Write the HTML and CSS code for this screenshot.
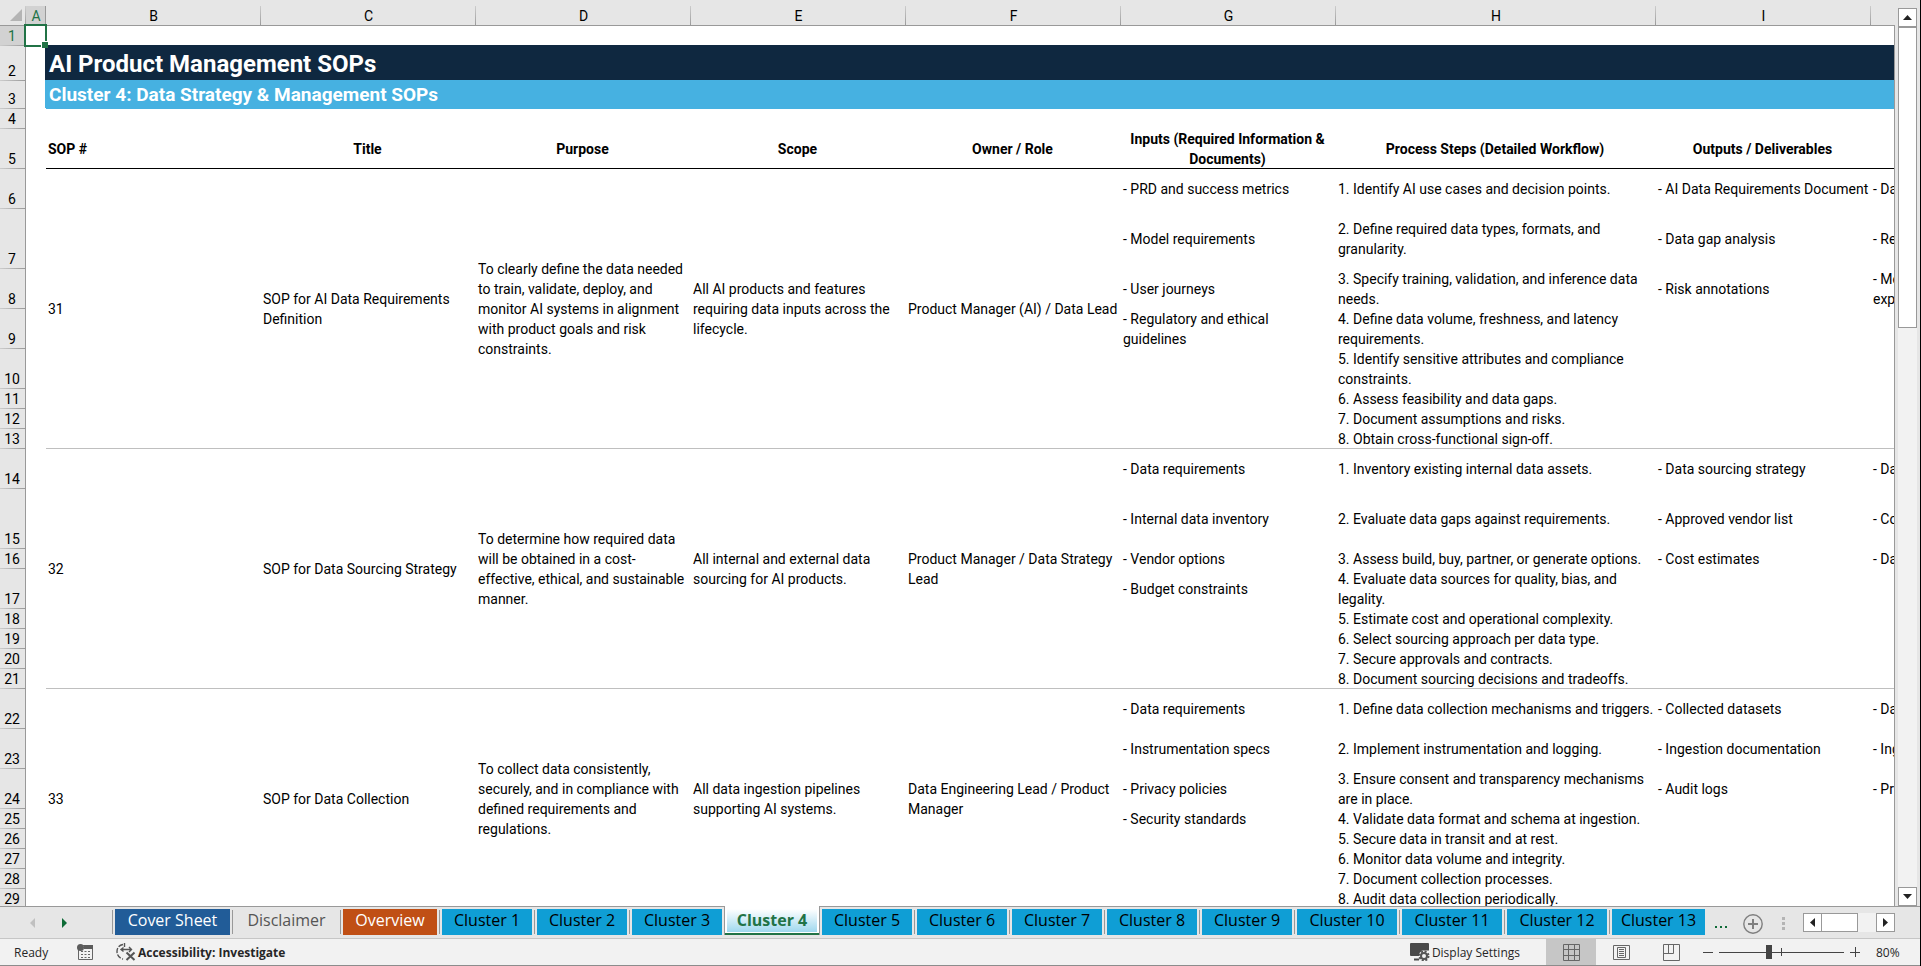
FILE: index.html
```html
<!DOCTYPE html>
<html lang="en">
  <head>
    <meta charset="UTF-8" />
    <meta name="viewport" content="width=device-width, initial-scale=1.0" />
    <title>AI Product Management SOPs</title>
    <link rel="stylesheet" href="styles.css">
  </head>
  <body>
    <main class="workspace">
      <div class="sheet-pane">
        <table class="sheet">
          <colgroup>
            <col class="col-num" />
            <col class="col-a" />
            <col span="6" class="col-std" />
            <col class="col-steps" />
            <col span="2" class="col-std" />
          </colgroup>
          <thead>
            <tr class="letters">
              <td class="corner"><svg width="12" height="12" viewBox="0 0 12 12"><path d="M12 0v12H0z" fill="#b4b4b4" /></svg></td>
              <th class="selected">A</th>
              <th>B</th>
              <th>C</th>
              <th>D</th>
              <th>E</th>
              <th>F</th>
              <th>G</th>
              <th>H</th>
              <th>I</th>
              <th></th>
            </tr>
          </thead>
          <tbody>
            <tr class="h20">
              <th class="num selected">1</th>
              <td class="active-cell"><span class="cursor"></span></td>
              <td colspan="9"></td>
            </tr>
            <tr class="h35">
              <th class="num">2</th>
              <td></td>
              <td colspan="9" class="banner">AI Product Management SOPs</td>
            </tr>
            <tr class="h28">
              <th class="num">3</th>
              <td></td>
              <td colspan="9" class="sub-banner">Cluster 4: Data Strategy &amp; Management SOPs</td>
            </tr>
            <tr class="h20">
              <th class="num">4</th>
              <td></td>
              <td colspan="9"></td>
            </tr>
            <tr class="h40 headings">
              <th class="num">5</th>
              <td></td>
              <th scope="col" class="left">SOP #</th>
              <th scope="col">Title</th>
              <th scope="col">Purpose</th>
              <th scope="col">Scope</th>
              <th scope="col">Owner / Role</th>
              <th scope="col">Inputs (Required Information &amp;<br />Documents)</th>
              <th scope="col">Process Steps (Detailed Workflow)</th>
              <th scope="col">Outputs / Deliverables</th>
              <th scope="col"></th>
            </tr>

            <!-- SOP 31 -->
            <tr class="h40">
              <th class="num">6</th>
              <td></td>
              <td rowspan="8" class="end">31</td>
              <td rowspan="8" class="end">SOP for AI Data Requirements<br />Definition</td>
              <td rowspan="8" class="end">To clearly define the data needed<br />to train, validate, deploy, and<br />monitor AI systems in alignment<br />with product goals and risk<br />constraints.</td>
              <td rowspan="8" class="end">All AI products and features<br />requiring data inputs across the<br />lifecycle.</td>
              <td rowspan="8" class="end">Product Manager (AI) / Data Lead</td>
              <td>- PRD and success metrics</td>
              <td>1. Identify AI use cases and decision points.</td>
              <td>- AI Data Requirements Document</td>
              <td>- Da</td>
            </tr>
            <tr class="h60">
              <th class="num">7</th>
              <td></td>
              <td>- Model requirements</td>
              <td>2. Define required data types, formats, and<br />granularity.</td>
              <td>- Data gap analysis</td>
              <td>- Re</td>
            </tr>
            <tr class="h40">
              <th class="num">8</th>
              <td></td>
              <td>- User journeys</td>
              <td>3. Specify training, validation, and inference data<br />needs.</td>
              <td>- Risk annotations</td>
              <td>- Mo<br />exp</td>
            </tr>
            <tr class="h40">
              <th class="num">9</th>
              <td></td>
              <td>- Regulatory and ethical<br />guidelines</td>
              <td>4. Define data volume, freshness, and latency<br />requirements.</td>
              <td></td>
              <td></td>
            </tr>
            <tr class="h40">
              <th class="num">10</th>
              <td></td>
              <td></td>
              <td>5. Identify sensitive attributes and compliance<br />constraints.</td>
              <td></td>
              <td></td>
            </tr>
            <tr class="h20">
              <th class="num">11</th>
              <td></td>
              <td></td>
              <td>6. Assess feasibility and data gaps.</td>
              <td></td>
              <td></td>
            </tr>
            <tr class="h20">
              <th class="num">12</th>
              <td></td>
              <td></td>
              <td>7. Document assumptions and risks.</td>
              <td></td>
              <td></td>
            </tr>
            <tr class="h20">
              <th class="num">13</th>
              <td></td>
              <td class="end"></td>
              <td class="end">8. Obtain cross-functional sign-off.</td>
              <td class="end"></td>
              <td class="end"></td>
            </tr>

            <!-- SOP 32 -->
            <tr class="h40">
              <th class="num">14</th>
              <td></td>
              <td rowspan="8" class="end">32</td>
              <td rowspan="8" class="end">SOP for Data Sourcing Strategy</td>
              <td rowspan="8" class="end">To determine how required data<br />will be obtained in a cost-<br />effective, ethical, and sustainable<br />manner.</td>
              <td rowspan="8" class="end">All internal and external data<br />sourcing for AI products.</td>
              <td rowspan="8" class="end">Product Manager / Data Strategy<br />Lead</td>
              <td>- Data requirements</td>
              <td>1. Inventory existing internal data assets.</td>
              <td>- Data sourcing strategy</td>
              <td>- Da</td>
            </tr>
            <tr class="h60">
              <th class="num">15</th>
              <td></td>
              <td>- Internal data inventory</td>
              <td>2. Evaluate data gaps against requirements.</td>
              <td>- Approved vendor list</td>
              <td>- Co</td>
            </tr>
            <tr class="h20">
              <th class="num">16</th>
              <td></td>
              <td>- Vendor options</td>
              <td>3. Assess build, buy, partner, or generate options.</td>
              <td>- Cost estimates</td>
              <td>- Da</td>
            </tr>
            <tr class="h40">
              <th class="num">17</th>
              <td></td>
              <td>- Budget constraints</td>
              <td>4. Evaluate data sources for quality, bias, and<br />legality.</td>
              <td></td>
              <td></td>
            </tr>
            <tr class="h20">
              <th class="num">18</th>
              <td></td>
              <td></td>
              <td>5. Estimate cost and operational complexity.</td>
              <td></td>
              <td></td>
            </tr>
            <tr class="h20">
              <th class="num">19</th>
              <td></td>
              <td></td>
              <td>6. Select sourcing approach per data type.</td>
              <td></td>
              <td></td>
            </tr>
            <tr class="h20">
              <th class="num">20</th>
              <td></td>
              <td></td>
              <td>7. Secure approvals and contracts.</td>
              <td></td>
              <td></td>
            </tr>
            <tr class="h20">
              <th class="num">21</th>
              <td></td>
              <td class="end"></td>
              <td class="end">8. Document sourcing decisions and tradeoffs.</td>
              <td class="end"></td>
              <td class="end"></td>
            </tr>

            <!-- SOP 33 -->
            <tr class="h40">
              <th class="num">22</th>
              <td></td>
              <td rowspan="8" class="end">33</td>
              <td rowspan="8" class="end">SOP for Data Collection</td>
              <td rowspan="8" class="end">To collect data consistently,<br />securely, and in compliance with<br />defined requirements and<br />regulations.</td>
              <td rowspan="8" class="end">All data ingestion pipelines<br />supporting AI systems.</td>
              <td rowspan="8" class="end">Data Engineering Lead / Product<br />Manager</td>
              <td>- Data requirements</td>
              <td>1. Define data collection mechanisms and triggers.</td>
              <td>- Collected datasets</td>
              <td>- Da</td>
            </tr>
            <tr class="h40">
              <th class="num">23</th>
              <td></td>
              <td>- Instrumentation specs</td>
              <td>2. Implement instrumentation and logging.</td>
              <td>- Ingestion documentation</td>
              <td>- Ing</td>
            </tr>
            <tr class="h40">
              <th class="num">24</th>
              <td></td>
              <td>- Privacy policies</td>
              <td>3. Ensure consent and transparency mechanisms<br />are in place.</td>
              <td>- Audit logs</td>
              <td>- Pr</td>
            </tr>
            <tr class="h20">
              <th class="num">25</th>
              <td></td>
              <td>- Security standards</td>
              <td>4. Validate data format and schema at ingestion.</td>
              <td></td>
              <td></td>
            </tr>
            <tr class="h20">
              <th class="num">26</th>
              <td></td>
              <td></td>
              <td>5. Secure data in transit and at rest.</td>
              <td></td>
              <td></td>
            </tr>
            <tr class="h20">
              <th class="num">27</th>
              <td></td>
              <td></td>
              <td>6. Monitor data volume and integrity.</td>
              <td></td>
              <td></td>
            </tr>
            <tr class="h20">
              <th class="num">28</th>
              <td></td>
              <td></td>
              <td>7. Document collection processes.</td>
              <td></td>
              <td></td>
            </tr>
            <tr class="h20">
              <th class="num">29</th>
              <td></td>
              <td class="end"></td>
              <td class="end">8. Audit data collection periodically.</td>
              <td class="end"></td>
              <td class="end"></td>
            </tr>
          </tbody>
        </table>
      </div>

      <div class="v-scroll">
        <button class="scroll-btn" aria-label="Scroll up"><svg width="9" height="5" viewBox="0 0 9 5"><path d="M4.500 0L9 5H0z" fill="#222" /></svg></button>
        <div class="v-track"><div class="v-thumb"></div></div>
        <button class="scroll-btn" aria-label="Scroll down"><svg width="9" height="5" viewBox="0 0 9 5"><path d="M0 0h9L4.500 5z" fill="#222" /></svg></button>
      </div>
    </main>

    <nav class="tab-bar">
      <div class="tab-nav">
        <button aria-label="Previous sheets"><svg width="5" height="10" viewBox="0 0 5 10"><path d="M5 0v10L0 5z" fill="#c0c0c0" /></svg></button>
        <button aria-label="Next sheets"><svg width="5" height="10" viewBox="0 0 5 10"><path d="M0 0v10l5-5z" fill="#0e6b37" /></svg></button>
      </div>
      <ul class="tabs">
        <li><button class="tab tab-cover">Cover Sheet</button></li>
        <li><button class="tab tab-plain">Disclaimer</button></li>
        <li><button class="tab tab-overview">Overview</button></li>
        <li><button class="tab">Cluster 1</button></li>
        <li><button class="tab">Cluster 2</button></li>
        <li><button class="tab">Cluster 3</button></li>
        <li class="current"><button class="tab">Cluster 4</button></li>
        <li><button class="tab">Cluster 5</button></li>
        <li><button class="tab">Cluster 6</button></li>
        <li><button class="tab">Cluster 7</button></li>
        <li><button class="tab">Cluster 8</button></li>
        <li><button class="tab">Cluster 9</button></li>
        <li><button class="tab tab-wide">Cluster 10</button></li>
        <li><button class="tab tab-wide">Cluster 11</button></li>
        <li><button class="tab tab-wide">Cluster 12</button></li>
        <li><button class="tab tab-last">Cluster 13</button></li>
      </ul>
      <div class="tab-tools">
        <button aria-label="More sheets"><svg width="14" height="20" viewBox="0 0 14 20"><path d="M1 12h2v2H1zM6 12h2v2H6zM11 12h2v2h-2z" fill="#0e6b37" /></svg></button>
        <button aria-label="New sheet"><svg width="20" height="20" viewBox="0 0 20 20" fill="none"><circle cx="10" cy="10" r="9.200" stroke="#7f7f7f" stroke-width="1.400" /><path d="M10 5v10M5 10h10" stroke="#7f7f7f" stroke-width="2" /></svg></button>
        <svg class="grip" width="3" height="13" viewBox="0 0 3 13"><path d="M0 0h3v3H0zM0 5h3v3H0zM0 10h3v3H0z" fill="#b4b4b4" /></svg>
      </div>
      <div class="h-scroll">
        <button class="scroll-btn" aria-label="Scroll left"><svg width="5" height="9" viewBox="0 0 5 9"><path d="M5 0v9L0 4.500z" fill="#222" /></svg></button>
        <div class="h-thumb"></div>
        <div class="h-track"></div>
        <button class="scroll-btn" aria-label="Scroll right"><svg width="5" height="9" viewBox="0 0 5 9"><path d="M0 0v9l5-4.500z" fill="#222" /></svg></button>
      </div>
    </nav>

    <footer class="status-bar">
      <span class="ready">Ready</span>
      <button class="macro" aria-label="Record macro">
        <svg width="16" height="16" viewBox="0 0 16 16">
          <path d="M5 1.500h10.500v14H1.500V6" fill="none" stroke="#666" />
          <path d="M7 1h9v4H7z" fill="#5c5c5c" />
          <circle cx="3.500" cy="3.500" r="3.500" fill="#5c5c5c" />
          <path d="M4 7.500h2M7.500 7.500h2M11 7.500h2M4 10.500h2M7.500 10.500h2M11 10.500h2M4 13.500h2M7.500 13.500h2M11 13.500h2" stroke="#666" />
        </svg>
      </button>
      <button class="access">
        <svg width="20" height="18" viewBox="0 0 20 18" fill="none" stroke="#555">
          <path d="M7 1.500C3 2 1 5 1 8.500S3 15 7 16" stroke-width="1.400" stroke-dasharray="5 1.500" />
          <path d="M8.500 0v4M5 6.500h10M7.500 4.500l-2.500 2 2.500 2M13 4l2.500 2.500L13 9" stroke-width="1.400" />
          <path d="M10.500 9.500l8 7.500M18.500 9.500l-8 7.500" stroke-width="2" />
        </svg>
        Accessibility: Investigate
      </button>
      <div class="status-right">
        <button class="display">
          <svg width="20" height="18" viewBox="0 0 20 18">
            <path d="M1 0h17a1 1 0 0 1 1 1v6.500h-7l-3 3v2.500H1a1 1 0 0 1-1-1V1a1 1 0 0 1 1-1z" fill="#4a4a4a" />
            <path d="M4 16.500h5" stroke="#4a4a4a" stroke-width="2" />
            <circle cx="14" cy="13" r="3" fill="none" stroke="#555" stroke-width="2" />
            <circle cx="14" cy="13" r="4.500" fill="none" stroke="#555" stroke-width="2" stroke-dasharray="2 1.534" />
          </svg>
          Display Settings
        </button>
        <button class="view active" aria-label="Normal view">
          <svg width="17" height="17" viewBox="0 0 17 17" fill="none" stroke="#666"><path d="M.5.5h16v16H.5zM5.500.5v16M11.500.5v16M.5 5.500h16M.5 11.500h16" /></svg>
        </button>
        <button class="view" aria-label="Page layout view">
          <svg width="17" height="17" viewBox="0 0 17 17" fill="none" stroke="#666"><path d="M.5 1.500h16v14H.5zM4.500 3.500h8v10h-8zM6 5.500h5M6 7.500h5M6 9.500h5M6 11.500h5" /></svg>
        </button>
        <button class="view" aria-label="Page break preview">
          <svg width="17" height="17" viewBox="0 0 17 17" fill="none" stroke="#666"><path d="M.5.500v16h16V.500zM.5 9.500h10V.500M5.500.500v9" /></svg>
        </button>
        <button class="zoom-btn" aria-label="Zoom out"><svg width="10" height="10" viewBox="0 0 10 10"><path d="M0 5.500h10" stroke="#444" /></svg></button>
        <span class="zoom">
          <input type="range" min="0" max="119" value="47" aria-label="Zoom" />
        </span>
        <button class="zoom-btn" aria-label="Zoom in"><svg width="10" height="10" viewBox="0 0 10 10"><path d="M0 5.500h10M5.500 0v10" stroke="#444" /></svg></button>
        <span class="percent">80%</span>
      </div>
    </footer>
  </body>
</html>
```
FILE: styles.css
```css
:root {
  --chrome: #e6e6e6;
  --chrome-selected: #d2d2d2;
  --line: #999;
  --green: #217346;
  --navy: #0f2840;
  --sky: #46b1e1;
  --tab-blue: #0f9ed5;
}

* {
  box-sizing: border-box;
  margin: 0;
  padding: 0;
}

body {
  display: flex;
  flex-direction: column;
  height: 100vh;
  overflow: hidden;
  background: var(--chrome);
  border-right: 1px solid #000;
  font-family: "Open Sans", "Noto Sans", sans-serif;
  color: #262626;
}

button {
  display: flex;
  align-items: center;
  justify-content: center;
  border: none;
  background: none;
  font: inherit;
  color: inherit;
  white-space: nowrap;
}

svg {
  display: block;
  flex: none;
}

/* Grid */
.workspace {
  display: flex;
  flex: 1;
  min-height: 0;
}

.sheet-pane {
  position: relative;
  flex: 1;
  min-width: 0;
  overflow: hidden;
}

.sheet-pane::after {
  content: "";
  position: absolute;
  top: 25px;
  right: 0;
  bottom: 0;
  width: 1px;
  background: var(--line);
}

.sheet {
  width: 2086px;
  table-layout: fixed;
  border-collapse: separate;
  border-spacing: 0;
  background: #fff;
  font: 14px/20px Roboto, sans-serif;
  color: #000;
}

.col-num {
  width: 26px;
}

.col-a {
  width: 20px;
}

.col-std {
  width: 215px;
}

.col-steps {
  width: 320px;
}

.sheet td,
.sheet th {
  padding-left: 2px;
  white-space: nowrap;
  vertical-align: middle;
}

.sheet td {
  text-align: left;
}

.h20 {
  height: 20px;
}

.h28 {
  height: 28px;
}

.h35 {
  height: 35px;
}

.h40 {
  height: 40px;
}

.h60 {
  height: 60px;
}

.letters {
  height: 26px;
}

.sheet .letters th,
.sheet .corner {
  padding: 6px 0 0;
  font-weight: 400;
  background: linear-gradient(var(--line), var(--line)) bottom / 100% 1px no-repeat,
    linear-gradient(#ccc, var(--line)) right bottom / 1px 20px no-repeat, var(--chrome);
}

.sheet .corner {
  padding: 4px 0 0 10px;
}

.sheet .letters .selected {
  background: linear-gradient(var(--line), var(--line)) bottom / 100% 1px no-repeat,
    linear-gradient(var(--line), var(--line)) right bottom / 1px 20px no-repeat,
    linear-gradient(var(--chrome-selected), var(--chrome-selected)) bottom / 100% 20px no-repeat, var(--chrome);
  color: var(--green);
}

.sheet .num {
  padding: 0 2px 0 0;
  font-weight: 400;
  text-align: center;
  vertical-align: bottom;
  background: linear-gradient(var(--line), var(--line)) right / 1px 100% no-repeat,
    linear-gradient(90deg, #ccc, var(--line)) bottom / 100% 1px no-repeat, var(--chrome);
}

.sheet .num.selected {
  background-color: var(--chrome-selected);
  color: var(--green);
}

.active-cell {
  position: relative;
}

.cursor {
  position: absolute;
  inset: -2px -1px -1px -2px;
  border: 2px solid var(--green);
}

.cursor::after {
  content: "";
  position: absolute;
  right: -3px;
  bottom: -3px;
  width: 6px;
  height: 6px;
  background: var(--green);
  border: solid #fff;
  border-width: 1px 0 0 1px;
}

/* Fills cover the gridline above and to the left */
.sheet .banner,
.sheet .sub-banner {
  padding-left: 3px;
  font-weight: 700;
  color: #fff;
}

.sheet .banner {
  background: var(--navy);
  box-shadow: -1px -1px var(--navy);
  font-size: 24px;
}

.sheet .sub-banner {
  background: var(--sky);
  box-shadow: -1px -1px var(--sky);
  font-size: 19px;
}

.headings th:not(.num) {
  padding-right: 4px;
  font-weight: 700;
  box-shadow: inset 0 -1px #000;
}

.headings .left {
  text-align: left;
}

.sheet .end {
  box-shadow: inset 0 -1px #bfbfbf;
}

/* Scrollbars */
.scroll-btn {
  width: 19px;
  height: 19px;
  flex: none;
  background: #fff;
  border: 1px solid var(--line);
}

.v-scroll {
  display: flex;
  flex-direction: column;
  width: 25px;
  padding: 8px 3px 0;
}

.v-track {
  flex: 1;
  background: #f2f2f2;
}

.v-thumb {
  height: 35%;
  background: #fff;
  border: 1px solid var(--line);
}

.h-scroll {
  display: flex;
  width: 92px;
  margin: 6px 25px 0 0;
}

.h-thumb {
  width: 36px;
  height: 19px;
  background: #fff;
  border: solid var(--line);
  border-width: 1px 1px 1px 0;
}

.h-track {
  flex: 1;
  height: 19px;
  background: #f2f2f2;
}

/* Sheet tabs */
.tab-bar {
  display: flex;
  flex: none;
  height: 33px;
  border-top: 1px solid var(--line);
  border-bottom: 1px solid #c6c6c6;
}

.tab-nav {
  display: flex;
  gap: 27px;
  width: 112px;
  padding-left: 30px;
}

.tabs {
  display: flex;
  list-style: none;
  border-left: 1px solid transparent;
  background: linear-gradient(var(--line), var(--line)) left 3px / 1px 24px no-repeat;
  background-origin: border-box;
}

.tabs li {
  height: 28px;
  padding: 2px 3px 0 2px;
  background: linear-gradient(var(--line), var(--line)) right 3px / 1px 24px no-repeat;
}

.tabs li:last-child {
  background: none;
}

.tab {
  width: 90px;
  height: 26px;
  padding-bottom: 4px;
  background: var(--tab-blue);
  font-size: 16px;
  color: #000;
}

.tab-cover {
  width: 115px;
  background: #215c98;
  color: #fff;
}

.tab-plain {
  width: 103px;
  background: none;
  color: #555;
}

.tab-overview {
  width: 94px;
  background: #c04f15;
  color: #fff;
}

.tab-wide {
  width: 100px;
}

.tab-last {
  width: 93px;
}

/* Current tab runs up into the grid */
.tabs .current {
  height: 29px;
  margin: -1px 0 0 -1px;
  padding: 3px 2px 0;
  background: #fff;
  border: solid var(--line);
  border-width: 0 1px;
  box-shadow: 0 -1px #fff, inset 0 -2px var(--green);
}

.current .tab {
  height: 23px;
  padding-bottom: 1px;
  background: linear-gradient(#fff, #9fd8ee);
  font-weight: 700;
  color: var(--green);
}

.tab-tools {
  display: flex;
  flex: 1;
  align-items: center;
  padding: 2px 18px 0 6px;
}

.tab-tools button {
  margin-right: 15px;
}

.grip {
  margin-left: auto;
}

/* Status bar */
.status-bar {
  display: flex;
  flex: none;
  align-items: center;
  height: 27px;
  padding-left: 14px;
  background: #f2f2f2;
  border-bottom: 1px solid #8c8c8c;
  font-size: 12px;
}

.ready {
  width: 63px;
}

.access {
  gap: 2px;
  margin-left: 23px;
  font-weight: 700;
}

.status-right {
  display: flex;
  align-items: center;
  align-self: stretch;
  margin-left: auto;
  padding-right: 20px;
}

.display {
  gap: 2px;
  margin-right: 26px;
}

.view {
  width: 50px;
  align-self: stretch;
}

.view.active {
  background: #c6c6c6;
}

.zoom-btn {
  width: 10px;
}

.view + .zoom-btn {
  margin-left: 7px;
}

/* Tick marks 100% on the zoom rail */
.zoom {
  width: 125px;
  height: 20px;
  margin: 0 6px;
  background: linear-gradient(#444, #444) center / 100% 1px no-repeat,
    linear-gradient(#444, #444) 50% 50% / 1px 8px no-repeat;
}

.zoom input {
  display: block;
  width: 100%;
  height: 20px;
  background: none;
  appearance: none;
}

.zoom input::-webkit-slider-thumb {
  appearance: none;
  width: 6px;
  height: 14px;
  background: #444;
}

.percent {
  width: 24px;
  margin-left: 16px;
}
```
